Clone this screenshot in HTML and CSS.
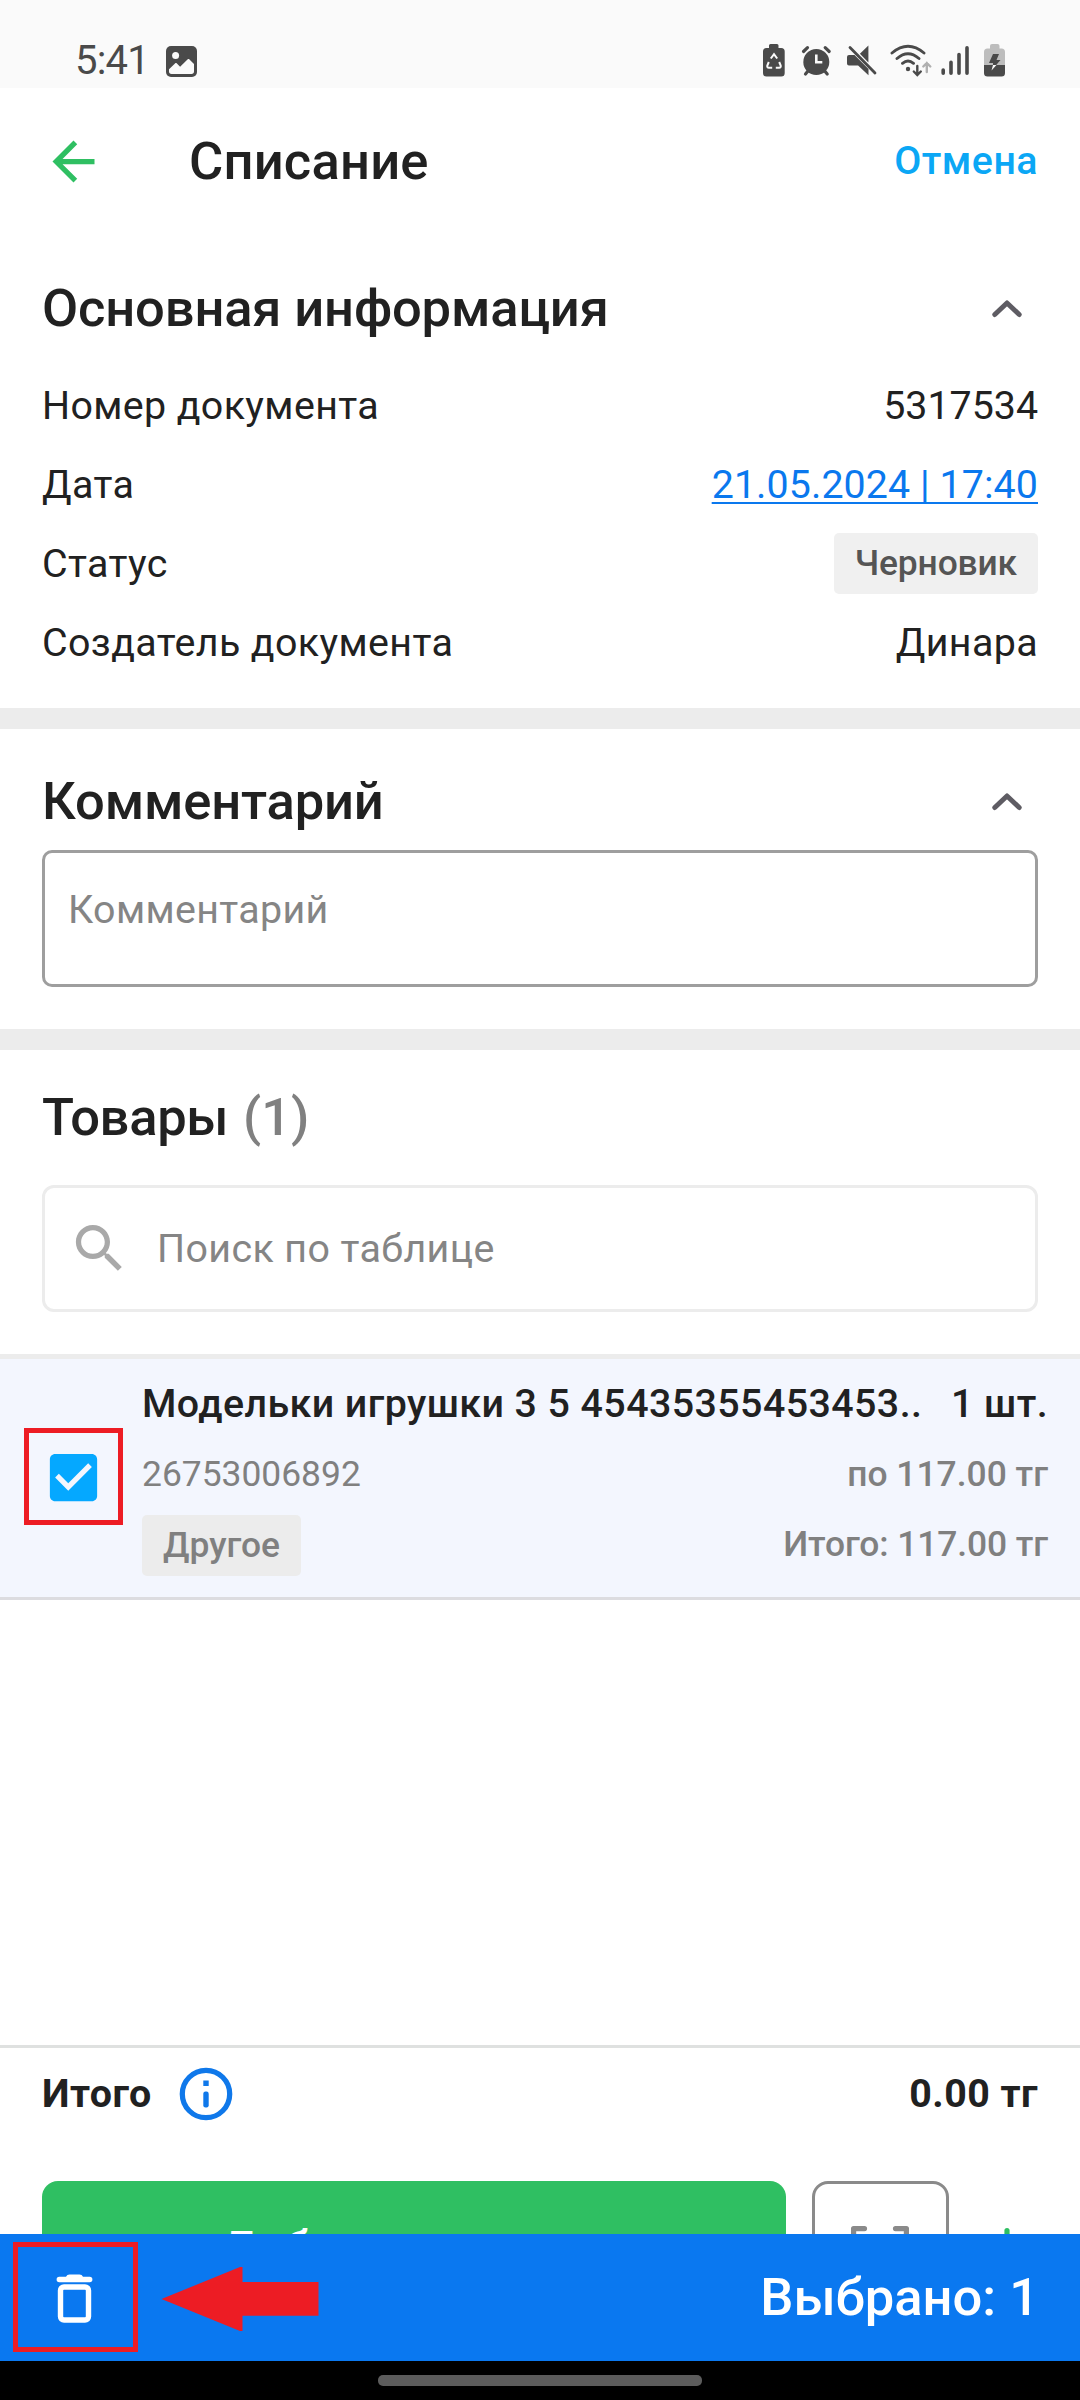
FILE: index.html
```html
<!DOCTYPE html>
<html lang="ru">
<head>
<meta charset="utf-8">
<title>Списание</title>
<link rel="stylesheet" href="styles.css">
</head>
<body>
<div class="screen">
  <div class="status-bar">
    <span class="clock">5:41</span>
    <svg class="gallery-icon" width="31" height="31" viewBox="0 0 31 31">
      <rect width="31" height="31" rx="5" fill="#4a4a4a"/>
      <circle cx="9.6" cy="9.6" r="3.5" fill="#fafafa"/>
      <path d="M3 23.3 9 17.4c.7-.6 1.2-.6 1.9 0l3.2 3.3 7.4-7.2c.7-.6 1.3-.6 2 0l4.500 4.600v7.400c0 1.600-.9 2.500-2.500 2.500h-20C3.900 28 3 27.100 3 25.500z" fill="#fafafa"/>
    </svg>
    <div class="status-icons">
      <svg width="31" height="40" viewBox="762 40 31 40">
        <path d="M769 48v-2.500q0-1.500 1.500-1.500h6.500q1.500 0 1.500 1.500V48h2.700q3.500 0 3.500 3.500v21.500q0 3.500-3.500 3.500h-14.700q-3.500 0-3.500-3.500V51.500q0-3.500 3.500-3.500z" fill="#4a4a4a"/>
        <path d="M770.800 58.500l3.200-4.300 3.200 4.300M779.200 62l1.500 3.500q.5 2-1.700 2.300h-3.200M772.200 67.800h-3.200q-2.200-.3-1.700-2.300l1.500-3.500" fill="none" stroke="#fafafa" stroke-width="2"/>
      </svg>
      <svg width="46" height="40" viewBox="793 40 46 40">
        <circle cx="816.300" cy="62" r="13" fill="#4a4a4a"/>
        <path d="M803.500 51.500l4-3.800M829.200 51.500l-4-3.800M808 71l-2.500 3M824.700 71l2.500 3" stroke="#4a4a4a" stroke-width="3.200" stroke-linecap="round"/>
        <path d="M816.300 54.500v7.800h6" fill="none" stroke="#fafafa" stroke-width="2.600"/>
      </svg>
      <svg width="44" height="40" viewBox="839 40 44 40">
        <path d="M868.400 45.500v17l-8.500-8.800zM847 57q0-2 2-2h5.500l14 14v6.200l-10.400-9.700H849q-2 0-2-2z" fill="#4a4a4a"/>
        <path d="M850 47.500l25 25.500" stroke="#4a4a4a" stroke-width="2.800" stroke-linecap="round"/>
      </svg>
      <svg width="54" height="40" viewBox="883 40 54 40">
        <g fill="none" stroke="#4a4a4a" stroke-width="2.900" stroke-linecap="round">
          <path d="M892 53q16-13.500 32 0M897 58.500q11-9.500 22 0M902.500 63.300q5.500-4.500 11 0"/>
          <path d="M917.300 66v8.500M913.800 71.500l3.500 3.500 3.500-3.500" stroke-width="2.400"/>
          <path d="M926.800 72V63M923.300 66.500l3.500-3.500 3.500 3.500" stroke="#b0b0b0" stroke-width="2.400"/>
        </g>
        <circle cx="908" cy="69" r="2.200" fill="#4a4a4a"/>
      </svg>
      <svg width="39" height="40" viewBox="937 40 39 40">
        <path d="M943.200 70v3.200M951 62.300v10.900M959 54.500v18.700M967 47.800v25.400" stroke="#4a4a4a" stroke-width="3.600" stroke-linecap="round"/>
      </svg>
      <svg width="34" height="40" viewBox="976 40 34 40">
        <path d="M984 65V52q0-3.500 3.500-3.500h2.500V46q0-2 2-2h5.500q2 0 2 2v2.500h2q3.500 0 3.500 3.500v13z" fill="#bdbdbd"/>
        <path d="M984 65h21v8q0 3.500-3.500 3.500h-14q-3.500 0-3.500-3.500z" fill="#4a4a4a"/>
        <path d="M993 54h6l-2.500 6h4l-4.300 5h-3.200v-2h-4z" fill="#4a4a4a"/>
        <path d="M993 65h3.500l-5 5.500z" fill="#fafafa"/>
      </svg>
    </div>
  </div>

  <header class="app-bar">
    <svg width="63" height="63" viewBox="0 0 24 24"><path d="M20 11H7.830l5.590-5.590L12 4l-8 8 8 8 1.410-1.410L7.830 13H20v-2z" fill="#2fbf62"/></svg>
    <h1 class="title app-title">Списание</h1>
    <span class="cancel">Отмена</span>
  </header>

  <section class="info">
    <div class="section-head">
      <h2 class="title">Основная информация</h2>
      <svg class="chevron" width="32" height="20" viewBox="0 0 32 20"><path d="M3.800 15.500 16 4l12.200 11.500" fill="none" stroke="#5e5c63" stroke-width="5" stroke-linecap="round" stroke-linejoin="round"/></svg>
    </div>
    <div class="row"><span>Номер документа</span><span class="digits">5317534</span></div>
    <div class="row"><span>Дата</span><span class="digits date">21.05.2024 | 17:40</span></div>
    <div class="row"><span>Статус</span><span class="chip chip-status">Черновик</span></div>
    <div class="row"><span>Создатель документа</span><span>Динара</span></div>
  </section>

  <section class="comment">
    <div class="section-head">
      <h2 class="title">Комментарий</h2>
      <svg class="chevron" width="32" height="20" viewBox="0 0 32 20"><path d="M3.800 15.500 16 4l12.200 11.500" fill="none" stroke="#5e5c63" stroke-width="5" stroke-linecap="round" stroke-linejoin="round"/></svg>
    </div>
    <div class="comment-field">Комментарий</div>
  </section>

  <section class="goods">
    <div class="section-head">
      <h2 class="title">Товары <span class="count">(1)</span></h2>
    </div>
    <div class="search">
      <svg width="63" height="63" viewBox="0 0 24 24"><path d="M15.500 14h-.79l-.28-.27C15.410 12.590 16 11.110 16 9.500 16 5.910 13.090 3 9.500 3S3 5.910 3 9.500 5.910 16 9.500 16c1.610 0 3.090-.59 4.230-1.570l.27.28v.79l5 4.990L20.490 19l-4.990-5zm-6 0C7.010 14 5 11.990 5 9.500S7.010 5 9.500 5 14 7.010 14 9.500 11.990 14 9.500 14z" fill="#a9a9a9"/></svg>
      <span>Поиск по таблице</span>
    </div>
  </section>

  <div class="item">
    <div class="check">
      <svg width="63" height="63" viewBox="0 0 24 24"><path d="M4 4h16v16H4z" fill="#f3f6fe"/><path d="M19 3H5c-1.110 0-2 .9-2 2v14c0 1.100.89 2 2 2h14c1.110 0 2-.9 2-2V5c0-1.100-.89-2-2-2zm-9 14l-5-5 1.410-1.410L10 14.170l7.590-7.590L19 8l-9 9z" fill="#05a8ff"/></svg>
      <div class="mark mark-check"></div>
    </div>
    <div class="item-body">
      <div class="item-name"><span>Модельки игрушки 3 5 45435355453453..</span><span>1 шт.</span></div>
      <div class="item-line"><span class="code">26753006892</span><span>по 117.00 тг</span></div>
      <div class="item-line item-last"><span class="chip">Другое</span><span class="item-total">Итого: 117.00 тг</span></div>
    </div>
  </div>

  <footer class="summary">
    <div class="total">
      <span>Итого</span>
      <svg width="54" height="54" viewBox="0 0 54 54"><circle cx="27" cy="27" r="23.700" fill="none" stroke="#0f78ea" stroke-width="5.250"/><rect x="24.300" y="13.500" width="5.400" height="5.500" fill="#0f78ea"/><rect x="24.300" y="24.500" width="5.400" height="16" rx="2.200" fill="#0f78ea"/></svg>
      <span class="sum">0.00 тг</span>
    </div>
    <div class="actions">
      <div class="add">Добавить товар</div>
      <div class="scan"><svg width="58" height="46" viewBox="0 0 58 46"><path d="M2.600 20V2.600H13.500M44.500 2.600H55.400V20" fill="none" stroke="#8a8a8a" stroke-width="5.200" stroke-linecap="round" stroke-linejoin="round"/></svg></div>
      <svg class="plus" width="42" height="42" viewBox="0 0 42 42"><path d="M21 2.600v36.800M2.600 21h36.800" stroke="#2fbf62" stroke-width="5.200" stroke-linecap="round"/></svg>
    </div>
  </footer>

  <div class="selection">
    <svg width="38" height="50" viewBox="0 0 38 50"><rect x="4.500" y="14" width="28" height="33" rx="3.500" fill="none" stroke="#fff" stroke-width="5.400"/><path d="M3.300 3.800H10q1-2.300 3.500-2.300h10q2.500 0 3.500 2.300h6.700q2.700 0 2.700 2.700t-2.700 2.700H3.300Q.6 9.200.6 6.500t2.700-2.700z" fill="#fff"/></svg>
    <span class="title">Выбрано: 1</span>
    <div class="mark mark-trash"></div>
    <svg class="arrow" width="158" height="66" viewBox="0 0 158 66"><path d="M.5 33 79 1h2.500v15H157.500v33.700H81.500V65H79z" fill="#ed1c24"/></svg>
  </div>
  <div class="nav-bar"><div class="handle"></div></div>
</div>
</body>
</html>
```
FILE: styles.css
```css
* { box-sizing: border-box; }
body {
  margin: 0;
  background: #fff;
  color: #212121;
  font-family: Roboto, "Noto Sans", sans-serif;
  font-size: 39.375px;
  line-height: 48px;
}
svg { display: block; flex: none; }
span { white-space: pre; }
.screen {
  width: 1080px;
  height: 2400px;
  display: flex;
  flex-direction: column;
  overflow: hidden;
}
.status-bar {
  height: 88px;
  flex: none;
  display: flex;
  align-items: flex-start;
  padding: 40px 70px 0 75px;
  background: #fafafa;
}
.clock {
  width: 91px;
  margin-top: -3px;
  color: #4a4a4a;
  font-size: 40px;
  letter-spacing: -0.8px;
}
.gallery-icon { margin-top: 6px; }
.status-icons { display: flex; margin-left: auto; }

.app-bar {
  height: 147px;
  flex: none;
  display: flex;
  align-items: center;
  padding: 0 42px;
}
.title {
  margin: 0;
  font-size: 52.5px;
  font-weight: 500;
  line-height: 62px;
  letter-spacing: -0.15px;
}
.app-title { margin: -2px 0 0 84px; letter-spacing: 0.2px; }
.cancel {
  margin: -1px 0 0 auto;
  color: #0ba7f5;
  font-weight: 500;
  letter-spacing: 0.45px;
}

.section-head {
  display: flex;
  align-items: center;
  justify-content: space-between;
}
.chevron { margin: 2px 15px 0 0; }
.info { padding: 15px 42px 26px; border-bottom: 21px solid #ececec; }
.info .section-head { height: 116px; }
.row {
  height: 79px;
  display: flex;
  align-items: center;
  justify-content: space-between;
  letter-spacing: 0.38px;
}
.digits { letter-spacing: 0; }
.date {
  letter-spacing: 0.08px;
  color: #0a78ee;
  text-decoration: underline;
  text-decoration-thickness: 2px;
  text-underline-offset: 4px;
  text-decoration-skip-ink: none;
}
.chip {
  height: 61px;
  padding: 0 21px;
  border-radius: 5px;
  background: #ececec;
  font-size: 35.4px;
  font-weight: 500;
  line-height: 61px;
}
.chip-status { background: #f0f0f0; color: #555; letter-spacing: -0.15px; }

.comment { padding: 23px 42px 42px; border-bottom: 21px solid #ececec; }
.comment .section-head { height: 98px; }
.comment-field {
  height: 137px;
  padding: 33px 23px;
  border: 3px solid #9e9e9e;
  border-radius: 10px;
  color: #858585;
  letter-spacing: 0.35px;
}

.goods { padding: 0 42px 42px; }
.goods .section-head { height: 133px; margin-bottom: 2px; }
.goods .title { letter-spacing: -0.3px; }
.count { margin-left: 2px; color: #808080; letter-spacing: 0; }
.search {
  height: 127px;
  display: flex;
  align-items: center;
  gap: 26px;
  padding: 0 23px;
  border: 3px solid #ececec;
  border-radius: 12px;
  color: #858585;
  letter-spacing: 0.4px;
}

.item {
  display: flex;
  padding: 9px 32px 15px 42px;
  border-top: 5px solid #ececec;
  border-bottom: 3px solid #dcdce0;
  background: #f3f6fe;
}
.check { position: relative; width: 100px; padding-top: 78px; }
.item-body { flex: 1; color: #808080; font-size: 35.4px; font-weight: 500; }
.item-name, .item-line {
  display: flex;
  align-items: center;
  justify-content: space-between;
}
.item-name { height: 71px; color: #212121; font-size: 39.375px; letter-spacing: 0.42px; }
.item-line { height: 69px; }
.item-last { height: 74px; }
.item-total { margin-top: -2px; letter-spacing: -0.1px; }
.code { font-weight: 400; }

.mark { position: absolute; border: 5px solid #ed1c24; }
.mark-check { left: -18px; top: 60px; width: 99px; height: 97px; }
.mark-trash { left: 13px; top: 8px; width: 125px; height: 110px; }

.summary { margin-top: auto; border-top: 3px solid #dfe1e0; }
.total {
  height: 91px;
  display: flex;
  align-items: center;
  gap: 27px;
  padding: 0 42px;
  font-weight: 700;
  letter-spacing: 0.45px;
}
.sum { margin-left: auto; }
.actions {
  height: 95px;
  padding: 42px 42px 0;
  display: flex;
  align-items: flex-start;
  overflow: hidden;
}
.add {
  width: 744px;
  height: 137px;
  padding-left: 180px;
  border-radius: 16px;
  background: #2fbf62;
  color: #fff;
  font-size: 47.25px;
  font-weight: 500;
  line-height: 137px;
}
.scan {
  width: 137px;
  height: 137px;
  margin-left: 26px;
  padding: 42px 0 0 36px;
  border: 3px solid #8a8a8a;
  border-radius: 16px;
}
.plus { margin: 47px 0 0 37px; }

.selection {
  position: relative;
  height: 127px;
  flex: none;
  display: flex;
  align-items: center;
  justify-content: space-between;
  padding: 0 41px 0 56px;
  background: #0a78f0;
  color: #fff;
}
.selection .title { margin-top: -2px; letter-spacing: 0; }
.arrow { position: absolute; left: 161px; top: 32px; }
.nav-bar {
  height: 39px;
  flex: none;
  display: flex;
  justify-content: center;
  padding-top: 14px;
  background: #000;
}
.handle { width: 324px; height: 11px; border-radius: 5px; background: #5c5c5c; }
```
